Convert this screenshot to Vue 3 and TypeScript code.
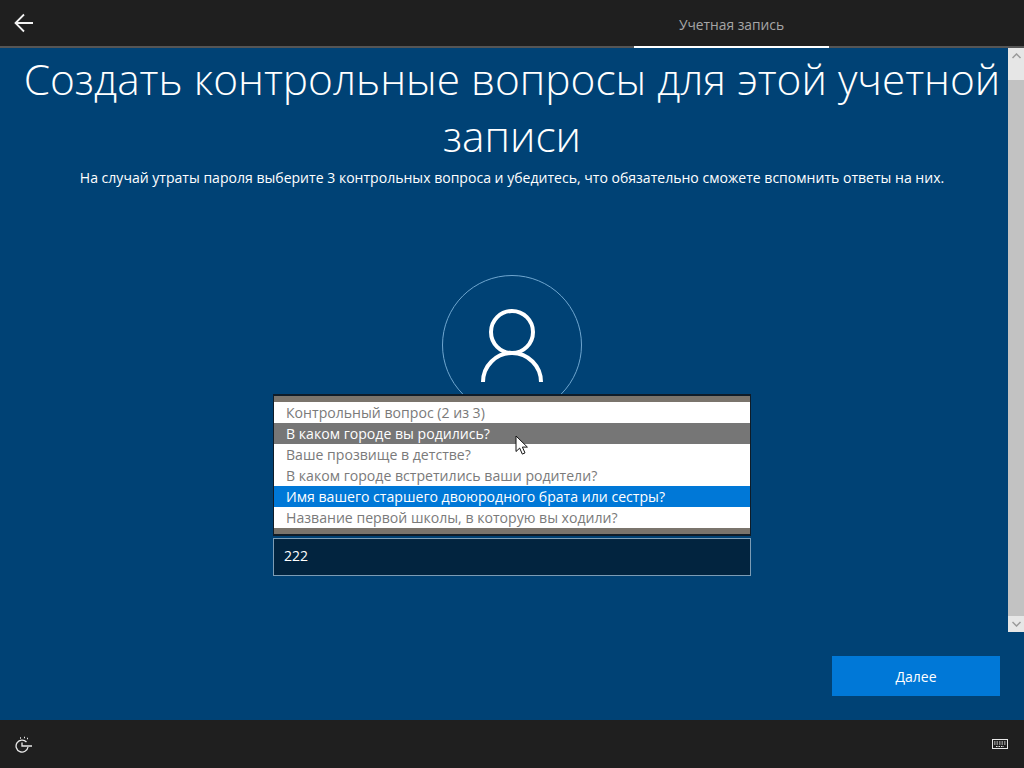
<script setup lang="ts">
interface Question { text: string; state?: 'hover' | 'selected' }
const questions: Question[] = [
  { text: 'Контрольный вопрос (2 из 3)' },
  { text: 'В каком городе вы родились?', state: 'hover' },
  { text: 'Ваше прозвище в детстве?' },
  { text: 'В каком городе встретились ваши родители?' },
  { text: 'Имя вашего старшего двоюродного брата или сестры?', state: 'selected' },
  { text: 'Название первой школы, в которую вы ходили?' },
]
</script>

<template>
  <div class="page">
    <header class="topbar">
      <button class="back" aria-label="Назад">
        <svg width="20" height="20" viewBox="0 0 20 20" fill="none" stroke="#f2f2f2" stroke-width="1.8">
          <path d="M19 10H2M10 1.500 1.500 10l8.500 8.500" />
        </svg>
      </button>
      <div class="tab">Учетная запись</div>
    </header>

    <main class="main">
      <h1 class="title">Создать контрольные вопросы для этой учетной записи</h1>
      <p class="sub">На случай утраты пароля выберите 3 контрольных вопроса и убедитесь, что обязательно сможете вспомнить ответы на них.</p>

      <div class="form">
        <svg class="avatar" width="140" height="140" viewBox="0 0 140 140" fill="none">
          <circle cx="70" cy="70" r="69.500" stroke="#6fa6cf" />
          <circle cx="70" cy="57" r="21" stroke="#fff" stroke-width="4" />
          <path d="M41 107a29 29 0 0 1 58 0" stroke="#fff" stroke-width="4" />
        </svg>

        <div class="field">
          <ul class="dropdown">
            <li v-for="q in questions" :key="q.text" class="option" :class="q.state">{{ q.text }}</li>
          </ul>
          <div class="input">222</div>
        </div>
      </div>

      <div class="actions">
        <button class="next">Далее</button>
      </div>

      <div class="scrollbar">
        <div class="sb-btn">
          <svg width="9" height="6" viewBox="0 0 9 6" fill="none" stroke="#9a9a9a" stroke-width="1.500"><path d="M.5 5 4.500 1l4 4" /></svg>
        </div>
        <div class="sb-track"></div>
        <div class="sb-thumb"></div>
        <div class="sb-btn">
          <svg width="9" height="6" viewBox="0 0 9 6" fill="none" stroke="#9a9a9a" stroke-width="1.500"><path d="M.5 1l4 4 4-4" /></svg>
        </div>
      </div>

      <svg class="cursor" width="15" height="21" viewBox="0 0 15 21">
        <path d="M1 1v15.500l3.700-3.400 2.600 6 2.700-1.200-2.600-5.800h5z" fill="#fff" stroke="#111" stroke-width="1" />
      </svg>
    </main>

    <footer class="footer">
      <svg width="18" height="18" viewBox="0 0 18 18" fill="none" stroke="#e8e8e8" stroke-width="1.300">
        <path d="M11.500 7a6 6 0 1 0 1.500 5" />
        <path d="M7 7.500V11h10M5 3h1M9 2.500h1M12 3.500h1" />
      </svg>
      <svg width="18" height="14" viewBox="0 0 18 14" fill="none" stroke="#e8e8e8">
        <rect x="1.500" y="2.500" width="15" height="9" />
        <path d="M3 5h12M3 7h12M5 9.500h8" stroke-dasharray="1.500 1" />
      </svg>
    </footer>
  </div>
</template>

<style scoped>
.page {
  width: 1024px;
  height: 768px;
  display: flex;
  flex-direction: column;
  overflow: hidden;
  background: #004275;
  color: #fff;
  font-family: "Open Sans", "Liberation Sans", sans-serif;
}
.topbar {
  height: 48px;
  flex: none;
  display: flex;
  justify-content: space-between;
  background: #1f1f1f;
  border-bottom: 2px solid #555;
  box-sizing: border-box;
}
.back {
  width: 48px;
  height: 46px;
  padding: 0;
  background: none;
  border: 0;
  display: flex;
  align-items: center;
  justify-content: center;
}
.tab {
  width: 195px;
  margin-right: 195px;
  height: 48px;
  box-sizing: border-box;
  border-bottom: 2px solid #fff;
  display: flex;
  align-items: center;
  justify-content: center;
  padding-top: 2px;
  font-size: 13.800px;
  color: #a6a6a6;
}
.main {
  position: relative;
  flex: 1;
  display: flex;
  flex-direction: column;
  align-items: center;
  min-height: 0;
}
.title {
  margin: 2px 0 0;
  width: 990px;
  font-size: 42.400px;
  line-height: 57px;
  font-weight: 300;
  text-align: center;
}
.sub {
  margin: 4px 0 0;
  font-size: 14.050px;
  line-height: 20px;
  white-space: nowrap;
}
.form {
  width: 478px;
  margin-top: 87px;
  display: flex;
  flex-direction: column;
  align-items: center;
}
.avatar {
  display: block;
}
.field {
  position: relative;
  width: 100%;
  margin-top: 123px;
}
.dropdown {
  position: absolute;
  left: 0;
  right: 0;
  bottom: 100%;
  margin: 0 0 2px;
  padding: 6px 0;
  list-style: none;
  box-sizing: border-box;
  height: 142px;
  background: #7a746c;
  border: solid #0f1c28;
  border-width: 2px 1px;
}
.option {
  height: 21px;
  padding-left: 12px;
  background: #fff;
  color: #7a7a7a;
  font-size: 14.100px;
  line-height: 21px;
  white-space: nowrap;
}
.option.hover {
  background: #767676;
  color: #fff;
}
.option.selected {
  background: #0078d7;
  color: #fff;
}
.input {
  height: 38px;
  box-sizing: border-box;
  padding-left: 10px;
  background: #02243f;
  border: 1px solid #7c9cb5;
  font-size: 14px;
  line-height: 33px;
}
.actions {
  margin-top: auto;
  margin-bottom: 24px;
  align-self: flex-end;
  margin-right: 24px;
}
.next {
  display: block;
  width: 168px;
  height: 40px;
  background: #0078d7;
  border: 0;
  color: #fff;
  font-family: inherit;
  font-size: 14px;
}
.scrollbar {
  position: absolute;
  top: 0;
  right: 0;
  width: 16px;
  height: 584px;
  display: flex;
  flex-direction: column;
  background: #e6e6e6;
}
.sb-btn {
  height: 16px;
  flex: none;
  display: flex;
  align-items: center;
  justify-content: center;
}
.sb-track {
  height: 16px;
  flex: none;
}
.sb-thumb {
  flex: 1;
  background: #c2c2c2;
}
.cursor {
  position: absolute;
  left: 515px;
  top: 387px;
}
.footer {
  height: 48px;
  flex: none;
  display: flex;
  align-items: center;
  justify-content: space-between;
  padding: 0 15px;
  background: #1f1f1f;
}
</style>
